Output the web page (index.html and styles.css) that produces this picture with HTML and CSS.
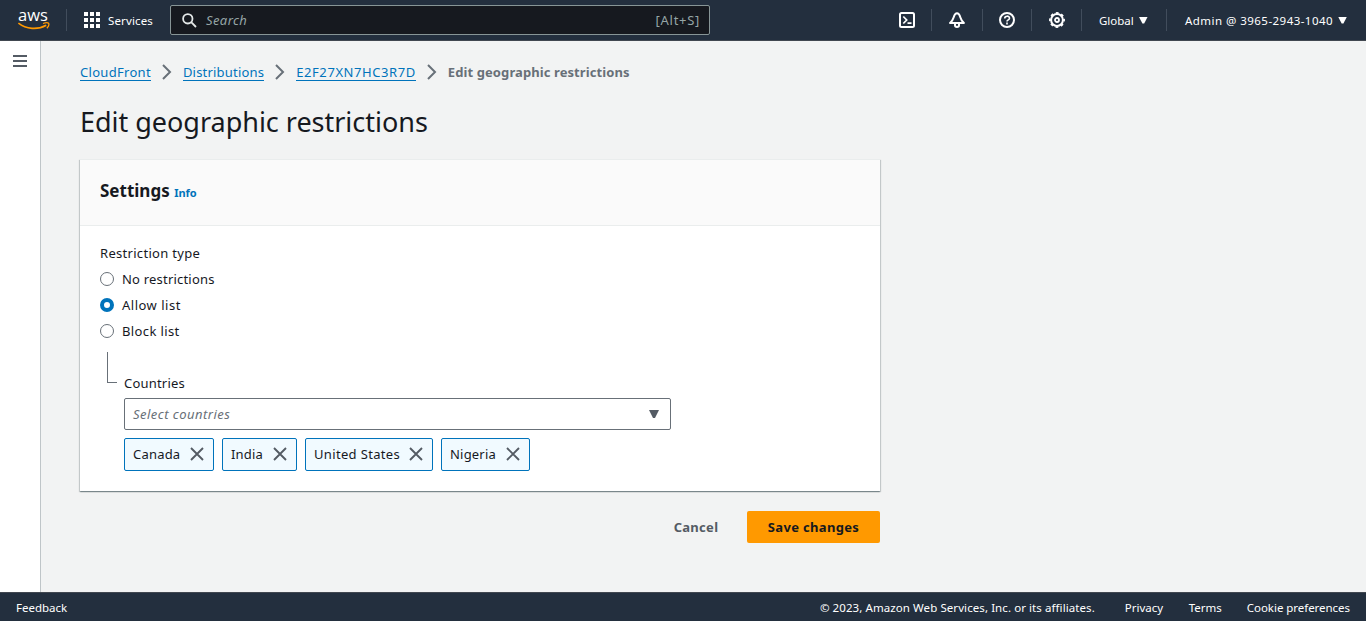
FILE: index.html
```html
<!DOCTYPE html>
<html lang="en">
<head>
<meta charset="utf-8">
<title>Edit geographic restrictions</title>
<link rel="stylesheet" href="styles.css">
</head>
<body>
<header class="topbar">
  <a class="logo" aria-label="AWS">
    <span class="logo-text">aws</span>
    <svg class="logo-smile" width="32" height="9" viewBox="0 0 32 9"><path d="M.4 1.100C8 7.400 20 8 28.200 3.200" fill="none" stroke="#f90" stroke-width="1.700"/><path d="M25 1.500c2.300-.8 4.800-.9 5.600-.2.500.8-.2 3.300-1.700 5" fill="none" stroke="#f90" stroke-width="1.300"/></svg>
  </a>
  <button class="services"><svg width="16" height="16" viewBox="0 0 16 16" fill="#fff"><path d="M0 0h4v4H0zM6 0h4v4H6zM12 0h4v4h-4zM0 6h4v4H0zM6 6h4v4H6zM12 6h4v4h-4zM0 12h4v4H0zM6 12h4v4H6zM12 12h4v4h-4z"/></svg><span class="t-services">Services</span></button>
  <div class="search">
    <svg width="15" height="15" viewBox="0 0 15 15" fill="none" stroke="#e4e8e8" stroke-width="1.800"><circle cx="5.800" cy="5.800" r="4.700"/><path d="M9.200 9.200l4.800 4.800"/></svg>
    <span class="t-search">Search</span><span class="t-alt">[Alt+S]</span>
  </div>
  <nav class="tools">
    <a class="tool shell"><svg width="16" height="16" viewBox="0 0 16 16" fill="none" stroke="#fff" stroke-width="2"><rect x="1" y="1" width="14" height="14" rx="1.500"/><path d="M4.300 4.500l3.400 3.500-3.400 3.500M8.500 11.200h4" stroke-width="1.700"/></svg></a>
    <a class="tool bell"><svg width="16" height="16" viewBox="0 0 16 16" fill="none" stroke="#fff" stroke-width="2" stroke-linejoin="round"><path d="M8 1.300C6.200 1.300 5.200 3.500 4.600 5.500 4 7.600 2.900 9.200 1.100 11h13.800C13.100 9.200 12 7.600 11.400 5.500 10.800 3.500 9.800 1.300 8 1.300z"/><path d="M6 11.500v1.700c0 2.300 4 2.300 4 0v-1.700"/></svg></a>
    <a class="tool help"><svg width="16" height="16" viewBox="0 0 16 16" fill="none" stroke="#fff" stroke-width="2"><circle cx="8" cy="8" r="7"/><path d="M5.700 6.500c0-3.100 4.800-3 4.800-.3C10.500 8 8 7.700 8 9.600M8 10.600v1.800" stroke-width="1.600"/></svg></a>
    <a class="tool gear"><svg width="16" height="16" viewBox="0 0 16 16" fill="none" stroke="#fff"><circle cx="8" cy="8" r="5.900" stroke-width="2"/><circle cx="8" cy="8" r="7.100" stroke-width="1.700" stroke-dasharray="2.800 2.776" stroke-dashoffset="1.400"/><circle cx="8" cy="8" r="2" stroke-width="1.800"/></svg></a>
    <a class="tool region"><span class="t-global">Global</span><i class="caret"></i></a>
    <a class="tool account"><span class="t-admin">Admin @ 3965-2943-1040</span><i class="caret"></i></a>
  </nav>
</header>
<div class="shell-body">
  <aside class="rail"><button class="menu" aria-label="Open navigation"><i></i><i></i><i></i></button></aside>
  <main class="content">
    <nav class="crumbs">
      <a class="t-cf">CloudFront</a><svg class="sep" width="10" height="16" viewBox="0 0 10 16"><path d="M1 1l7 7-7 7"/></svg>
      <a class="t-dist">Distributions</a><svg class="sep" width="10" height="16" viewBox="0 0 10 16"><path d="M1 1l7 7-7 7"/></svg>
      <a class="t-id">E2F27XN7HC3R7D</a><svg class="sep" width="10" height="16" viewBox="0 0 10 16"><path d="M1 1l7 7-7 7"/></svg>
      <span class="t-here">Edit geographic restrictions</span>
    </nav>
    <h1>Edit geographic restrictions</h1>
    <section class="card">
      <div class="card-head"><h2 class="t-settings">Settings</h2><a class="t-info">Info</a></div>
      <div class="card-body">
        <div class="label"><span class="t-rt">Restriction type</span></div>
        <label class="radio"><i class="dot"></i><span class="t-no">No restrictions</span></label>
        <label class="radio"><i class="dot on"></i><span class="t-allow">Allow list</span></label>
        <label class="radio"><i class="dot"></i><span class="t-block">Block list</span></label>
        <div class="nested">
          <div class="elbow"></div>
          <div class="field">
            <div class="label"><span class="t-countries">Countries</span></div>
            <div class="select"><span class="t-select">Select countries</span><i class="caret dark"></i></div>
            <div class="tokens">
              <span class="token w1"><span class="t-canada">Canada</span><svg width="14" height="14" viewBox="0 0 14 14"><path d="M1 1l12 12M13 1L1 13"/></svg></span>
              <span class="token w2"><span class="t-india">India</span><svg width="14" height="14" viewBox="0 0 14 14"><path d="M1 1l12 12M13 1L1 13"/></svg></span>
              <span class="token w3"><span class="t-us">United States</span><svg width="14" height="14" viewBox="0 0 14 14"><path d="M1 1l12 12M13 1L1 13"/></svg></span>
              <span class="token w4"><span class="t-nigeria">Nigeria</span><svg width="14" height="14" viewBox="0 0 14 14"><path d="M1 1l12 12M13 1L1 13"/></svg></span>
            </div>
          </div>
        </div>
      </div>
    </section>
    <div class="actions"><button class="cancel"><span class="t-cancel">Cancel</span></button><button class="save"><span class="t-save">Save changes</span></button></div>
  </main>
</div>
<footer class="footer">
  <a class="t-feedback">Feedback</a>
  <span class="t-copy">© 2023, Amazon Web Services, Inc. or its affiliates.</span>
  <a class="t-privacy">Privacy</a><a class="t-terms">Terms</a><a class="t-cookie">Cookie preferences</a>
</footer>
</body>
</html>
```
FILE: styles.css
```css
* { box-sizing: border-box; }
body { margin: 0; height: 621px; display: flex; flex-direction: column; overflow: hidden; background: #f2f3f3; color: #16191f; font: 13px/20px "Noto Sans", sans-serif; }
button { border: 0; padding: 0; background: none; font: inherit; color: inherit; }
h1, h2 { margin: 0; }
span, a { white-space: nowrap; }
svg { display: block; flex: none; }

/* Top navigation */
.topbar { flex: none; height: 41px; display: flex; align-items: center; background: #232f3e; border-bottom: 1px solid #414750; color: #fff; font-size: 11.5px; }
.logo { width: 49px; height: 22px; margin-left: 18px; border-right: 1px solid #414d5c; display: block; }
.logo-text { display: block; height: 13px; font: 500 16.5px/11px "Open Sans", sans-serif; }
.services { display: flex; align-items: center; gap: 8px; margin-left: 17px; width: 86px; }
.t-services { padding-top: 1px; letter-spacing: .14px; }
.search { width: 540px; height: 30px; display: flex; align-items: center; padding: 0 9px 0 11px; border: 1px solid #879596; border-radius: 2px; background: #16191f; color: #95a5a6; font-size: 13px; }
.t-search { margin-left: 9px; font-style: italic; letter-spacing: .4px; }
.t-alt { margin-left: auto; letter-spacing: .7px; }
.tools { margin-left: auto; display: flex; height: 22px; }
.tool { display: flex; align-items: center; border-left: 1px solid #414d5c; }
.tool.shell { border: 0; width: 32px; }
.tool.bell { width: 51px; padding-left: 17px; }
.tool.help { width: 49px; padding-left: 16px; }
.tool.gear { width: 50px; padding-left: 17px; }
.tool.region { width: 85px; padding-left: 17px; }
.tool.account { width: 200px; padding-left: 18px; }
.t-global, .t-admin { padding-top: 1px; }
.t-admin { letter-spacing: .46px; }
.caret { width: 9px; height: 7px; margin-left: 5px; background: #fff; clip-path: polygon(0 0, 100% 0, 60% 100%, 40% 100%); }

/* Page shell */
.shell-body { flex: 1; display: flex; min-height: 0; }
.rail { width: 41px; background: #fff; border-right: 1px solid #bfc5c8; }
.menu { display: flex; flex-direction: column; gap: 3px; margin: 14px 0 0 13px; }
.menu i { width: 14px; height: 2px; background: #545b64; }
.content { width: 840px; padding: 21px 0 0 39px; }

/* Breadcrumbs and title */
.crumbs { display: flex; align-items: center; height: 20px; }
.crumbs a { color: #0073bb; border-bottom: 1px solid #0073bb; line-height: 16px; }
.sep { margin: 0 11px; fill: none; stroke: #687078; stroke-width: 2; }
.t-cf { letter-spacing: .3px; }
.t-dist { letter-spacing: .2px; }
.t-id { letter-spacing: .58px; }
.t-here { font-weight: 700; color: #687078; letter-spacing: .09px; }
h1 { height: 36px; margin: 22px 0 19px; font-size: 27px; font-weight: 400; line-height: 36px; white-space: nowrap; letter-spacing: -.02px; }

/* Settings card */
.card { width: 800px; height: 332px; background: #fff; box-shadow: 0 1px 1px 0 rgba(0,28,36,.3), 1px 1px 1px 0 rgba(0,28,36,.15), -1px 1px 1px 0 rgba(0,28,36,.15); border-top: 1px solid #eaeded; }
.card-head { height: 66px; padding: 20px 20px 0; display: flex; align-items: baseline; gap: 4.5px; background: #fafafa; border-bottom: 1px solid #eaeded; }
.t-settings { font-size: 17px; line-height: 22px; }
.t-info { color: #0073bb; font-size: 11px; font-weight: 700; }
.card-body { padding: 17px 20px; }
.label { height: 20px; }
.t-rt { letter-spacing: .3px; }
.t-no { letter-spacing: .2px; }
.t-allow { letter-spacing: .5px; }
.t-block { letter-spacing: .38px; }
.t-countries { letter-spacing: .2px; }
.radio { display: flex; align-items: center; gap: 8px; height: 20px; margin-top: 6px; }
.dot { width: 14px; height: 14px; border: 1px solid #687078; border-radius: 50%; }
.dot.on { border: 4px solid #0073bb; }
.nested { display: flex; margin-top: 10px; }
.elbow { width: 10px; height: 31px; margin: 1px 7px 0; border: solid #687078; border-width: 0 0 1px 1px; }
.field { padding-top: 22px; }
.select { width: 547px; height: 32px; margin-top: 5px; padding: 0 11px 0 8px; display: flex; align-items: center; justify-content: space-between; border: 1px solid #687078; border-radius: 2px; }
.t-select { font-style: italic; color: #687078; letter-spacing: .48px; }
.caret.dark { width: 10px; height: 8px; background: #545b64; }
.tokens { display: flex; gap: 8px; margin-top: 8px; }
.token { height: 33px; display: flex; align-items: center; justify-content: space-between; padding: 0 9px 1px 8px; border: 1px solid #0073bb; border-radius: 2px; background: #f1faff; }
.token svg { fill: none; stroke: #545b64; stroke-width: 1.9; }
.t-canada, .t-india, .t-nigeria { letter-spacing: .2px; }
.t-us { letter-spacing: .34px; }
.w1 { width: 90px; } .w2 { width: 75px; } .w3 { width: 128px; } .w4 { width: 89px; }

.actions { display: flex; justify-content: flex-end; width: 800px; margin-top: 20px; font-weight: 700; }
.actions button { height: 32px; }
.cancel { width: 88px; margin-right: 7px; color: #545b64; letter-spacing: .3px; }
.save { width: 133px; background: #f90; border-radius: 2px; letter-spacing: .32px; }

/* Footer */
.footer { flex: none; height: 29px; display: flex; align-items: center; padding: 2px 16px 0; border-top: 1px solid #414750; background: #232f3e; color: #fff; font-size: 11.5px; }
.t-copy { margin-left: auto; letter-spacing: .08px; }
.t-privacy { margin-left: 30px; }
.t-terms { margin-left: 25.5px; }
.t-cookie { margin-left: 25px; letter-spacing: -.04px; }
```
